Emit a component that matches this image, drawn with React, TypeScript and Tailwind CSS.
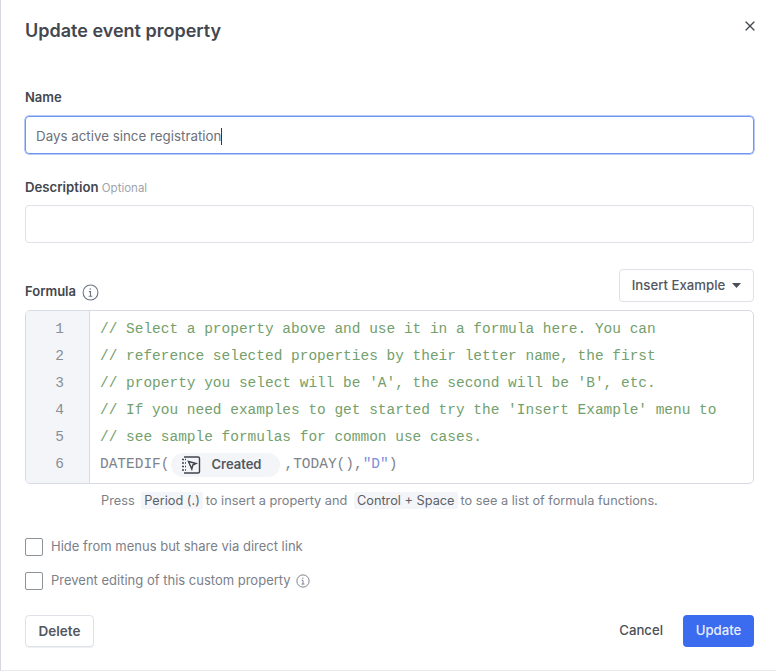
import { X } from 'lucide-react';

const comments = [
  "// Select a property above and use it in a formula here. You can",
  "// reference selected properties by their letter name, the first",
  "// property you select will be 'A', the second will be 'B', etc.",
  "// If you need examples to get started try the 'Insert Example' menu to",
  "// see sample formulas for common use cases.",
];

function InfoIcon({ size }: { size: number }) {
  return (
    <svg width={size} height={size} viewBox="0 0 16 16" fill="none" stroke="#6b7280" strokeWidth="1">
      <circle cx="8" cy="8" r="7" />
      <path d="M6.5 7.2H8V11.5M6.3 11.5H9.7" />
      <circle cx="7.8" cy="4.8" r="0.7" fill="#6b7280" stroke="none" />
    </svg>
  );
}

function PropertyIcon() {
  return (
    <svg width="20" height="20" viewBox="0 0 20 20" fill="none" stroke="#3f444d" strokeWidth="1.4">
      <path d="M3 2H17A1.5 1.5 0 0 1 18.5 3.5V16.5A1.5 1.5 0 0 1 17 18H3" />
      <path d="M1 4.5H5M1 8H5M1 11.5H5M1 15H5" strokeDasharray="2 1" />
      <path d="M7.5 6.5L15 8.5L11.8 10L10.8 14Z" />
    </svg>
  );
}

function Checkbox({ children }: { children: React.ReactNode }) {
  return (
    <label className="flex items-center gap-[8px] h-[18px] text-[13px] text-[#7b8089]">
      <span className="w-[18px] h-[18px] rounded-[2px] border border-[#8d929a] bg-white" />
      <span className="flex items-center gap-[5px] -mt-[1px]">{children}</span>
    </label>
  );
}

function Key({ children }: { children: React.ReactNode }) {
  return <span className="bg-[#f4f5f8] text-[#5b6069] px-[3px] py-[1px] mx-[3px] rounded-[2px]">{children}</span>;
}

export default function App() {
  return (
    <div className="relative w-[776px] h-[671px] bg-white border-l border-b border-l-[#d5d7de] border-b-[#e8e9ec] pl-[24px] pr-[22px] font-['Inter',sans-serif] overflow-hidden">
      <button className="absolute top-[18px] right-[18px] text-[#41454d]">
        <X size={16} strokeWidth={1.8} />
      </button>

      {/* Header */}
      <h1 className="pt-[19px] h-[70px] text-[18px] leading-[24px] font-semibold text-[#43474f]">Update event property</h1>

      {/* Name */}
      <div className="h-[46px] pt-[18px] text-[13px] leading-[18px] font-semibold text-[#43474f]">Name</div>
      <div className="h-[38px] flex items-center rounded-[4px] border border-[#7095f0] shadow-[0_0_0_0.5px_#7095f0] pl-[10px] pt-[2px] text-[13.35px] text-[#6c717a]">
        Days active since registration
        <span className="w-px h-[17px] bg-[#33363c]" />
      </div>

      {/* Description */}
      <div className="h-[51px] pt-[24px] text-[13.2px] leading-[18px] font-semibold text-[#43474f]">
        Description <span className="text-[11.5px] font-normal text-[#a0a4ac]">Optional</span>
      </div>
      <div className="h-[38px] rounded-[4px] border border-[#dfe1e8]" />

      {/* Formula */}
      <div className="mt-[26px] h-[33px] flex items-center justify-between">
        <div className="flex items-center gap-[6px] mt-[13px] text-[13px] font-semibold text-[#43474f]">
          Formula <InfoIcon size={17} />
        </div>
        <button className="w-[135px] h-[33px] flex items-center justify-center gap-[7px] rounded-[4px] border border-[#dfe1e8] text-[13.2px] font-medium text-[#53575f]">
          Insert Example
          <svg width="9" height="5" viewBox="0 0 9 5"><path d="M0 0H9L4.5 5Z" fill="#4b4f57" /></svg>
        </button>
      </div>

      <div className="mt-[8px] h-[174px] flex rounded-[5px] border border-[#d8dbe6] overflow-hidden font-['Liberation_Mono',monospace] text-[14.48px] leading-[27px]">
        <div className="w-[64px] bg-[#f4f5f9] border-r border-[#d8dbe6] pt-[5px] text-right pr-[25px] text-[#8a8e95]">
          {[1, 2, 3, 4, 5, 6].map((n) => <div key={n}>{n}</div>)}
        </div>
        <div className="flex-1 pt-[5px] pl-[10px] whitespace-pre">
          {comments.map((line) => <div key={line} className="text-[#73a06c]">{line}</div>)}
          <div className="flex items-center h-[27px] text-[#7f838a]">
            DATEDIF(
            <span className="inline-flex items-center h-[24px] w-[109px] ml-[2px] mr-[4px] pl-[10px] rounded-full bg-[#f4f5f9] font-['Inter',sans-serif] text-[13px] font-semibold text-[#53575f]">
              <PropertyIcon />
              <span className="ml-[10px]">Created</span>
            </span>
            ,TODAY(),<span className="text-[#7d8fd8]">"D"</span>)
          </div>
        </div>
      </div>

      <p className="mt-[7px] pl-[76px] h-[20px] text-[12.75px] leading-[20px] text-[#7b8089] whitespace-nowrap">
        Press <Key>Period (.)</Key>to insert a property and <Key>Control + Space</Key>to see a list of formula functions.
      </p>

      {/* Options */}
      <div className="mt-[27px] flex flex-col gap-[16px]">
        <Checkbox>Hide from menus but share via direct link</Checkbox>
        <Checkbox>Prevent editing of this custom property <InfoIcon size={14} /></Checkbox>
      </div>

      {/* Footer */}
      <div className="mt-[25px] flex items-center justify-between">
        <button className="w-[69px] h-[32px] rounded-[4px] border border-[#dfe1e8] shadow-[0_1px_1px_#eceef2] text-[13.5px] font-semibold text-[#53575f]">Delete</button>
        <div className="flex items-center gap-[20px]">
          <button className="text-[13.2px] font-medium text-[#4b4f57]">Cancel</button>
          <button className="w-[71px] h-[32px] rounded-[4px] bg-[#3b6bef] text-[13.2px] font-medium text-[#e8eefc]">Update</button>
        </div>
      </div>
    </div>
  );
}
